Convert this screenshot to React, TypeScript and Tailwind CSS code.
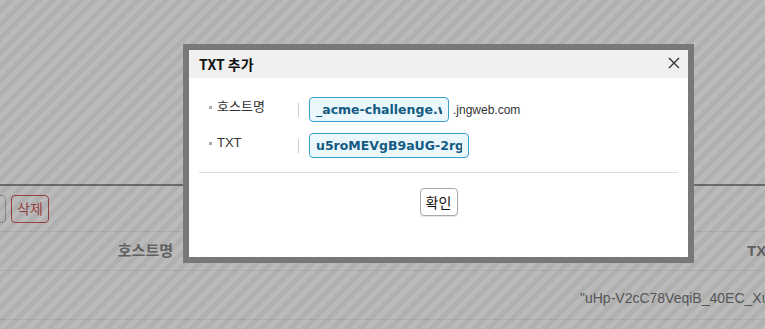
import * as React from "react";

const Row: React.FC<React.PropsWithChildren & { label: string }> = ({ label, children }) => {
  return (
    <div className="flex items-center h-[25px]">
      <div className="-mt-[5px] flex w-[109px] items-center gap-[5px] pl-[20px] text-[13px] text-[#333]">
        <span className="h-[3px] w-[3px] bg-[#aaa]" />
        <span>{label}</span>
      </div>
      <div className="h-[14px] w-px bg-[#ccc]" />
      <div className="ml-[10px] flex items-center gap-[4px]">{children}</div>
    </div>
  );
};

export default function App() {
  return (
    <div className="relative h-[329px] w-[765px] overflow-hidden bg-white font-['Liberation_Sans','Noto_Sans_CJK_KR',sans-serif]">
      {/* page underneath */}
      <div className="h-[184px]" />
      <div className="h-[2px] bg-[#959595]" />
      <div className="-ml-[30px] flex h-[45px] items-start gap-[5px] pt-[9px]">
        <button className="h-[28px] w-[36px] rounded border border-[#bbb] bg-white" />
        <button className="h-[28px] rounded border border-[#d45a5a] bg-white px-[5px] text-[14px] text-[#d45a5a]">
          삭제
        </button>
      </div>
      <div className="flex h-[39px] items-center border-t border-[#eee] text-[15px] font-bold text-[#888]">
        <div className="w-[183px] pr-[10px] text-right">호스트명</div>
        <div className="ml-auto w-[18px] overflow-hidden whitespace-nowrap">TXT</div>
      </div>
      <div className="flex h-[49px] items-center overflow-hidden border-t border-[#eee] pt-[6px] pl-[580px] text-[14px] whitespace-nowrap text-[#787878]">
        "uHp-V2cC78VeqiB_40EC_Xu3kE
      </div>
      <div className="border-t border-[#eee]" />

      {/* dim overlay */}
      <div className="absolute inset-0 bg-[repeating-linear-gradient(135deg,rgba(0,0,0,0.27)_0_5px,rgba(0,0,0,0.31)_5px_10px)]" />

      {/* dialog */}
      <div className="absolute left-[183px] top-[44px] w-[511px] border-[6px] border-[#787878] bg-white">
        <div className="flex h-[28px] items-center justify-between bg-[#f0f0f0] pl-[10px] pr-[8px]">
          <span className="text-[14px] font-bold text-[#111] font-['Noto_Sans_CJK_KR',sans-serif]">TXT 추가</span>
          <svg width="12" height="12" viewBox="0 0 12 12" className="-mt-[2px]">
            <path d="M1 1L11 11M11 1L1 11" stroke="#333" strokeWidth="1.4" />
          </svg>
        </div>
        <div className="flex flex-col gap-[11px] pt-[19px]">
          <Row label="호스트명">
            <input
              readOnly
              value="_acme-challenge.www"
              className="h-[25px] w-[140px] rounded-[4px] border border-[#3d9fce] bg-[#eaf7fd] px-[6px] text-[12.5px] font-bold text-[#135b82] outline-none font-['DejaVu_Sans',sans-serif]"
            />
            <span className="text-[12px] text-[#333]">.jngweb.com</span>
          </Row>
          <Row label="TXT">
            <input
              readOnly
              value="u5roMEVgB9aUG-2rg1Xk"
              className="h-[25px] w-[160px] rounded-[4px] border border-[#3d9fce] bg-[#eaf7fd] px-[6px] text-[12.5px] font-bold text-[#135b82] outline-none font-['DejaVu_Sans',sans-serif]"
            />
          </Row>
        </div>
        <div className="mx-[10px] mt-[14px] border-t border-[#ddd]" />
        <div className="flex justify-center pt-[15px] pb-[41px]">
          <button className="h-[28px] w-[38px] rounded-[4px] border border-[#aaa] bg-white text-[14px] text-[#111] font-['Noto_Sans_CJK_KR',sans-serif] shadow-[0_1px_1px_rgba(0,0,0,0.1)]">
            확인
          </button>
        </div>
      </div>
    </div>
  );
}
